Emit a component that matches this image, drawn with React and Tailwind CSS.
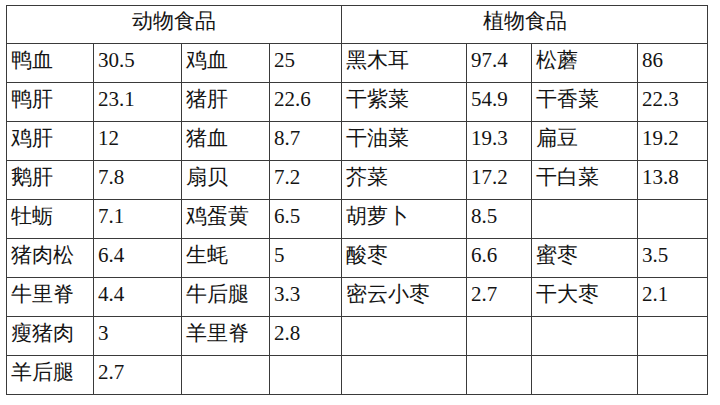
import React from 'react';

const animal = [
    ['鸭血', '30.5', '鸡血', '25'],
    ['鸭肝', '23.1', '猪肝', '22.6'],
    ['鸡肝', '12', '猪血', '8.7'],
    ['鹅肝', '7.8', '扇贝', '7.2'],
    ['牡蛎', '7.1', '鸡蛋黄', '6.5'],
    ['猪肉松', '6.4', '生蚝', '5'],
    ['牛里脊', '4.4', '牛后腿', '3.3'],
    ['瘦猪肉', '3', '羊里脊', '2.8'],
    ['羊后腿', '2.7', '', ''],
];

const plant = [
    ['黑木耳', '97.4', '松蘑', '86'],
    ['干紫菜', '54.9', '干香菜', '22.3'],
    ['干油菜', '19.3', '扁豆', '19.2'],
    ['芥菜', '17.2', '干白菜', '13.8'],
    ['胡萝卜', '8.5', '', ''],
    ['酸枣', '6.6', '蜜枣', '3.5'],
    ['密云小枣', '2.7', '干大枣', '2.1'],
    ['', '', '', ''],
    ['', '', '', ''],
];

const widths = ['w-[87px]', 'w-[88px]', 'w-[88px]', 'w-[72px]', 'w-[125px]', 'w-[65px]', 'w-[106px]', 'w-[70px]'];

const App = () => {
    return (
        <div className="w-[720px] h-[405px] bg-white pl-[6px] pt-[5px]">
            <table className="table-fixed border-collapse w-[701px] text-[21px] leading-none text-[#141414]">
                <colgroup>
                    {widths.map((w, i) => <col key={i} className={w} />)}
                </colgroup>
                <thead>
                    <tr className="h-[38px]">
                        <th colSpan={4} className="border border-[#3a3a3a] font-normal text-center align-middle pb-[7px]">
                            <span className="[font-family:'Liberation_Serif']">动物食品</span>
                        </th>
                        <th colSpan={4} className="border border-[#3a3a3a] font-normal text-center align-middle pb-[7px]">
                            <span className="[font-family:'Liberation_Serif']">植物食品</span>
                        </th>
                    </tr>
                </thead>
                <tbody>
                    {animal.map((row, r) => (
                        <tr key={r} className="h-[39px]">
                            {[...row, ...plant[r]].map((cell, c) => (
                                <td key={c} className="border border-[#3a3a3a] px-[4px] pb-[6px] align-middle whitespace-nowrap">
                                    <span className="[font-family:'Liberation_Serif']">{cell}</span>
                                </td>
                            ))}
                        </tr>
                    ))}
                </tbody>
            </table>
        </div>
    );
};

export default App;
